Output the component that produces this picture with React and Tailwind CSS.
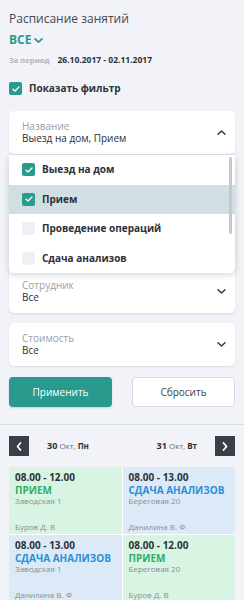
import React from 'react';

const teal = 'bg-[#2a9a8e]';

function Check({ checked }) {
  return (
    <span
      className={
        'flex h-[13px] w-[13px] shrink-0 items-center justify-center rounded-[2px] ' +
        (checked ? 'bg-[#2a9a8e]' : 'bg-[#eef0f5]')
      }
    >
      {checked && (
        <svg width="8" height="6" viewBox="0 0 8 6" fill="none">
          <path d="M1 3.2 L3 5 L7 1" stroke="#fff" strokeWidth="1.3" strokeLinecap="round" strokeLinejoin="round" />
        </svg>
      )}
    </span>
  );
}

function Chevron({ up, color = '#333', w = 9, h = 5, sw = 1.4 }) {
  return (
    <svg width={w} height={h} viewBox="0 0 9 5" fill="none">
      <path
        d={up ? 'M1 4.3 L4.5 1 L8 4.3' : 'M1 0.8 L4.5 4.1 L8 0.8'}
        stroke={color}
        strokeWidth={sw}
        strokeLinecap="round"
        strokeLinejoin="round"
      />
    </svg>
  );
}

// label/value are left out for the cards that sit fully under the open list
function FilterCard({ label, value, open }) {
  return (
    <div className="flex h-[43px] items-center justify-between rounded-[5px] bg-white pl-[13px] pr-[9px] shadow-[0_1px_2px_rgba(30,40,60,0.12)]">
      {label ? (
        <div className="flex flex-col">
          <span className="text-[10px] leading-[12px] text-[#9a9ea6]">{label}</span>
          <span className="text-[10px] leading-[13px] text-[#2b2f36]">{value}</span>
        </div>
      ) : (
        <div />
      )}
      <Chevron up={open} />
    </div>
  );
}

const options = [
  { name: 'Выезд на дом', checked: true },
  { name: 'Прием', checked: true, active: true },
  { name: 'Проведение операций', checked: false },
  { name: 'Сдача анализов', checked: false },
];

const events = [
  { time: '08.00 - 12.00', title: 'ПРИЕМ', place: 'Заводская 1', who: 'Буров Д. В', kind: 'green' },
  { time: '08.00 - 13.00', title: 'СДАЧА АНАЛИЗОВ', place: 'Береговая 20', who: 'Данилина В. Ф', kind: 'blue' },
  { time: '08.00 - 13.00', title: 'СДАЧА АНАЛИЗОВ', place: 'Заводская 1', who: 'Данилина В. Ф', kind: 'blue' },
  { time: '08.00 - 12.00', title: 'ПРИЕМ', place: 'Береговая 20', who: 'Буров Д. В', kind: 'green' },
];

function NavButton({ dir }) {
  return (
    <button className="flex h-[20px] w-[20px] shrink-0 items-center justify-center bg-[#3a3e46]">
      <svg width="6" height="9" viewBox="0 0 6 9" fill="none">
        <path
          d={dir === 'left' ? 'M4.5 1 L1.5 4.5 L4.5 8' : 'M1.5 1 L4.5 4.5 L1.5 8'}
          stroke="#fff"
          strokeWidth="1.8"
          strokeLinecap="round"
          strokeLinejoin="round"
        />
      </svg>
    </button>
  );
}

export default function App() {
  return (
    <div className="min-h-screen w-[244px] overflow-hidden bg-[#f1f3f8] font-['Open_Sans',sans-serif]">
      <div className="px-[9px] pt-[10px]">
        {/* Header */}
        <div className="text-[12px] leading-[18px] text-[#45484e]">Расписание занятий</div>
        <div className="mt-[4px] flex items-center gap-[3px] text-[12px] font-bold leading-[16px] text-[#2a9a8e]">
          ВСЕ
          <Chevron color="#2a9a8e" w={9} h={5} sw={1.8} />
        </div>
        <div className="mt-[6px] flex items-center gap-[8px] leading-[12px]">
          <span className="text-[7.5px] font-bold text-[#b0b3b9]">За период</span>
          <span className="text-[8.5px] font-bold text-[#2e3137]">26.10.2017 - 02.11.2017</span>
        </div>
        <div className="mt-[16px] flex h-[13px] items-center gap-[7px]">
          <Check checked />
          <span className="text-[10px] font-bold text-[#2e3137]">Показать фильтр</span>
        </div>

        {/* Filters */}
        <div className="relative mt-[16px] flex flex-col gap-[10px]">
          <FilterCard label="Название" value="Выезд на дом, Прием" open />
          <FilterCard />
          <FilterCard />
          <FilterCard label="Сотрудник" value="Все" />
          <FilterCard label="Стоимость" value="Все" />

          <div className="absolute left-0 right-0 top-[44px] z-10 h-[118px] overflow-hidden rounded-b-[5px] bg-white shadow-[0_2px_6px_rgba(30,40,60,0.18)]">
            {options.map((o) => (
              <div
                key={o.name}
                className={
                  'flex h-[29.5px] items-center gap-[7px] pl-[13px] ' + (o.active ? 'bg-[#d0dfe1]' : '')
                }
              >
                <Check checked={o.checked} />
                <span className="text-[10px] font-bold text-[#2e3137]">{o.name}</span>
              </div>
            ))}
            <div className="absolute right-[3px] top-[2px] h-[77px] w-[3px] rounded-full bg-[#c6c8cc]" />
          </div>
        </div>

        {/* Actions */}
        <div className="mt-[11px] grid grid-cols-2 gap-[20px]">
          <button className={teal + ' h-[30px] rounded-[4px] text-[10px] text-white shadow-[0_1px_2px_rgba(0,0,0,0.15)]'}>
            Применить
          </button>
          <button className="h-[30px] rounded-[4px] border border-[#d6d9df] bg-white text-[10px] text-[#3a3d43]">
            Сбросить
          </button>
        </div>
      </div>

      {/* Day navigation */}
      <div className="mt-[17px] border-t border-[#d6dde7]">
        <div className="flex h-[42px] items-center px-[9px]">
          <NavButton dir="left" />
          <div className="flex flex-1 items-center justify-between px-[18px] text-[#2e3137]">
            <span className="text-[8px]">
              <b className="text-[9px]">30</b> <span className="text-[#6b6f76]">Окт,</span> <b>Пн</b>
            </span>
            <span className="text-[8px]">
              <b className="text-[9px]">31</b> <span className="text-[#6b6f76]">Окт,</span> <b>Вт</b>
            </span>
          </div>
          <NavButton dir="right" />
        </div>

        {/* Schedule grid */}
        <div className="mx-[9px] grid grid-cols-2 gap-px bg-white">
          {events.map((e, i) => (
            <div
              key={i}
              className={
                'flex h-[67px] flex-col px-[6px] pb-[2px] pt-[4px] ' +
                (e.kind === 'green' ? 'bg-[#d8f5e4]' : 'bg-[#dbeaf6]')
              }
            >
              <span className="text-[10px] font-bold leading-[13px] text-[#2e3137]">{e.time}</span>
              <span
                className={
                  'mt-[1px] text-[10px] font-bold leading-[11px] ' +
                  (e.kind === 'green' ? 'text-[#2fae67]' : 'text-[#2b8fd6]')
                }
              >
                {e.title}
              </span>
              <span className="text-[8px] leading-[9px] text-[#8a8e95]">{e.place}</span>
              <span className="mt-auto text-[8px] leading-[10px] text-[#8a8e95]">{e.who}</span>
            </div>
          ))}
        </div>
      </div>
    </div>
  );
}
